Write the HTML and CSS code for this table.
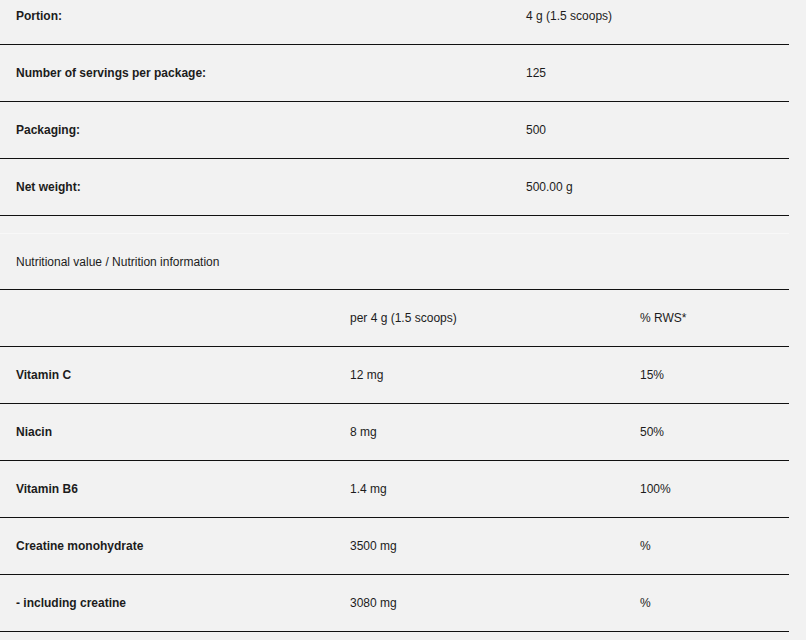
FILE: index.html
```html
<!DOCTYPE html>
<html>
<head>
<meta charset="utf-8">
<link rel="stylesheet" href="styles.css">
</head>
<body>
<div class="page">
  <div class="specs">
    <div class="row two"><div class="label">Portion:</div><div class="val">4 g (1.5 scoops)</div></div>
    <div class="row two"><div class="label">Number of servings per package:</div><div class="val">125</div></div>
    <div class="row two"><div class="label">Packaging:</div><div class="val">500</div></div>
    <div class="row two"><div class="label">Net weight:</div><div class="val">500.00 g</div></div>
  </div>
  <div class="nutri">
    <div class="row caption"><div class="plain">Nutritional value / Nutrition information</div></div>
    <div class="row three"><div></div><div class="plain">per 4 g (1.5 scoops)</div><div class="plain">% RWS*</div></div>
    <div class="row three"><div class="label">Vitamin C</div><div class="plain">12 mg</div><div class="plain">15%</div></div>
    <div class="row three"><div class="label">Niacin</div><div class="plain">8 mg</div><div class="plain">50%</div></div>
    <div class="row three"><div class="label">Vitamin B6</div><div class="plain">1.4 mg</div><div class="plain">100%</div></div>
    <div class="row three"><div class="label">Creatine monohydrate</div><div class="plain">3500 mg</div><div class="plain">%</div></div>
    <div class="row three"><div class="label">- including creatine</div><div class="plain">3080 mg</div><div class="plain">%</div></div>
  </div>
</div>
</body>
</html>
```
FILE: styles.css
```css
html, body {
  margin: 0;
  padding: 0;
  background: #f2f2f2;
}
body {
  font-family: "Liberation Sans", Arial, sans-serif;
  font-size: 12px;
  color: #1c1c1c;
  overflow: hidden;
}
.page {
  width: 789px;
  margin-top: -12px;
}
.row {
  height: 56px;
  border-bottom: 1px solid #111;
  display: grid;
  align-items: center;
}
.row > div {
  padding-left: 16px;
}
.two {
  grid-template-columns: 510px 1fr;
}
.three {
  grid-template-columns: 334px 290px 1fr;
}
.label {
  font-weight: bold;
}
.plain {
  font-weight: normal;
}
.nutri {
  margin-top: 17px;
  border-top: 1px solid #f8f8f8;
}
.caption {
  grid-template-columns: 1fr;
  height: 55px;
}
```
